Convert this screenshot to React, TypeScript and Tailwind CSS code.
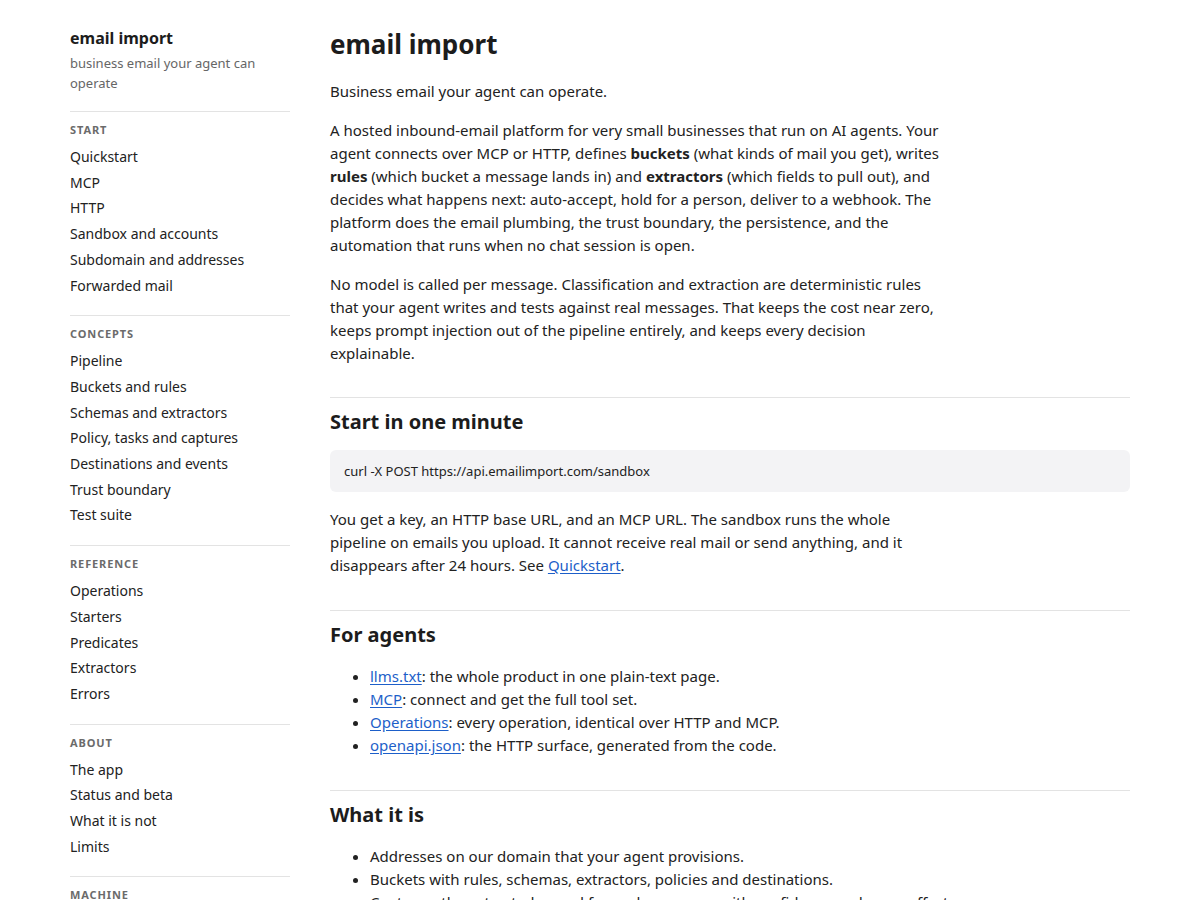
import React from "react";

const groups: { label: string; items: string[] }[] = [
  { label: "Start", items: ["Quickstart", "MCP", "HTTP", "Sandbox and accounts", "Subdomain and addresses", "Forwarded mail"] },
  { label: "Concepts", items: ["Pipeline", "Buckets and rules", "Schemas and extractors", "Policy, tasks and captures", "Destinations and events", "Trust boundary", "Test suite"] },
  { label: "Reference", items: ["Operations", "Starters", "Predicates", "Extractors", "Errors"] },
  { label: "About", items: ["The app", "Status and beta", "What it is not", "Limits"] },
  { label: "Machine", items: ["llms.txt", "openapi.json"] },
];

function A({ children }: { children: React.ReactNode }) {
  return <a href="#" className="text-[#1d5fc9] underline underline-offset-2">{children}</a>;
}

export default function App() {
  return (
    <div className="min-h-[900px] bg-white text-[#222]" style={{ fontFamily: "'Noto Sans', sans-serif" }}>
      <div className="mx-auto flex max-w-[1060px] gap-10 pt-[26px]">
        <aside className="w-[220px] shrink-0">
          <div className="text-[16px] font-bold leading-[24px] text-[#1c1c1c]">email import</div>
          <div className="mt-[3px] text-[13px] leading-[20px] text-[#666]">business email your agent can operate</div>
          <div className="pt-[3px]">
            {groups.map((g) => (
              <div key={g.label} className="mt-[15px] border-t border-[#e3e3e3] pt-[11px] pb-[2px]">
                <div className="text-[11px] font-bold uppercase leading-[14px] tracking-[0.08em] text-[#6b6b6b]">{g.label}</div>
                <ul className="mt-[7px]">
                  {g.items.map((it) => (
                    <li key={it} className="py-[3px] text-[14px] leading-[19.7px] text-[#222]">
                      <a href="#">{it}</a>
                    </li>
                  ))}
                </ul>
              </div>
            ))}
          </div>
        </aside>
        <main className="min-w-0 flex-1 text-[15px] leading-[23px]">
          <h1 className="text-[26px] font-bold leading-[36px] text-[#1c1c1c]">email import</h1>
          <p className="mt-[18px] max-w-[620px]">Business email your agent can operate.</p>
          <p className="mt-[16px] max-w-[620px]">
            A hosted inbound-email platform for very small businesses that run on AI agents. Your agent connects over MCP or HTTP, defines <b>buckets</b> (what kinds of mail you get), writes <b>rules</b> (which bucket a message lands in) and <b>extractors</b> (which fields to pull out), and decides what happens next: auto-accept, hold for a person, deliver to a webhook. The platform does the email plumbing, the trust boundary, the persistence, and the automation that runs when no chat session is open.
          </p>
          <p className="mt-[16px] max-w-[620px]">
            No model is called per message. Classification and extraction are deterministic rules that your agent writes and tests against real messages. That keeps the cost near zero, keeps prompt injection out of the pipeline entirely, and keeps every decision explainable.
          </p>

          <section className="mt-[32px] border-t border-[#e3e3e3] pt-[10px]">
            <h2 className="text-[20px] font-bold leading-[28px] text-[#1c1c1c]">Start in one minute</h2>
            <pre className="mt-[14px] rounded-[6px] bg-[#f3f3f5] px-[14px] py-[12px] text-[13px] leading-[18px] text-[#222]" style={{ fontFamily: "'Noto Sans', sans-serif" }}>curl -X POST https://api.emailimport.com/sandbox</pre>
            <p className="mt-[16px] max-w-[620px]">
              You get a key, an HTTP base URL, and an MCP URL. The sandbox runs the whole pipeline on emails you upload. It cannot receive real mail or send anything, and it disappears after 24 hours. See <A>Quickstart</A>.
            </p>
          </section>

          <section className="mt-[33px] border-t border-[#e3e3e3] pt-[10px]">
            <h2 className="text-[20px] font-bold leading-[28px] text-[#1c1c1c]">For agents</h2>
            <ul className="mt-[16px] list-disc pl-10">
              <li><A>llms.txt</A>: the whole product in one plain-text page.</li>
              <li><A>MCP</A>: connect and get the full tool set.</li>
              <li><A>Operations</A>: every operation, identical over HTTP and MCP.</li>
              <li><A>openapi.json</A>: the HTTP surface, generated from the code.</li>
            </ul>
          </section>

          <section className="mt-[33px] border-t border-[#e3e3e3] pt-[10px]">
            <h2 className="text-[20px] font-bold leading-[28px] text-[#1c1c1c]">What it is</h2>
            <ul className="mt-[16px] list-disc pl-10">
              <li>Addresses on our domain that your agent provisions.</li>
              <li>Buckets with rules, schemas, extractors, policies and destinations.</li>
              <li>Captures: the extracted record for each message, with confidence and every effect.</li>
              <li>A pipeline that runs on every message, whether or not a session is open.</li>
            </ul>
          </section>
        </main>
      </div>
    </div>
  );
}
